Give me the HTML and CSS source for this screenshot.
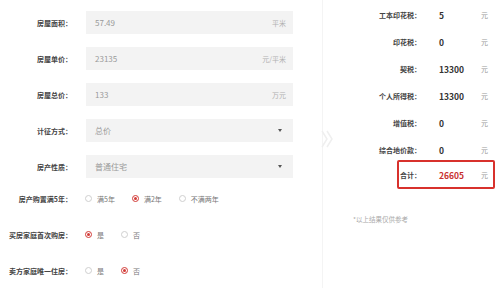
FILE: index.html
```html
<!DOCTYPE html>
<html lang="zh-CN">
<head>
<meta charset="utf-8">
<link rel="stylesheet" href="styles.css">
</head>
<body>
<div class="page">
  <div class="left">
    <div class="field">
      <label class="lbl">房屋面积：</label>
      <div class="input"><span class="val">57.49</span><span class="unit">平米</span></div>
    </div>
    <div class="field">
      <label class="lbl">房屋单价：</label>
      <div class="input"><span class="val">23135</span><span class="unit">元/平米</span></div>
    </div>
    <div class="field">
      <label class="lbl">房屋总价：</label>
      <div class="input"><span class="val">133</span><span class="unit">万元</span></div>
    </div>
    <div class="field">
      <label class="lbl">计征方式：</label>
      <div class="input"><span class="val">总价</span><span class="caret"></span></div>
    </div>
    <div class="field">
      <label class="lbl">房产性质：</label>
      <div class="input"><span class="val">普通住宅</span><span class="caret"></span></div>
    </div>
    <div class="radios">
      <div class="field">
        <label class="lbl">房产购置满5年：</label>
        <div class="opts">
          <span class="opt"><i class="radio"></i>满5年</span>
          <span class="opt"><i class="radio on"></i>满2年</span>
          <span class="opt"><i class="radio"></i>不满两年</span>
        </div>
      </div>
      <div class="field">
        <label class="lbl">买房家庭首次购房：</label>
        <div class="opts">
          <span class="opt"><i class="radio on"></i>是</span>
          <span class="opt"><i class="radio"></i>否</span>
        </div>
      </div>
      <div class="field">
        <label class="lbl">卖方家庭唯一住房：</label>
        <div class="opts">
          <span class="opt"><i class="radio"></i>是</span>
          <span class="opt"><i class="radio on"></i>否</span>
        </div>
      </div>
    </div>
  </div>
  <div class="divider">
    <svg class="chev" width="14" height="22" viewBox="0 0 14 22"><path d="M2 3 L7 11 L2 19 M7 3 L12 11 L7 19" fill="none" stroke="#efefef" stroke-width="1.5"/></svg>
  </div>
  <div class="right">
    <div class="row"><span class="rl">工本印花税：</span><span class="rv">5</span><span class="ru">元</span></div>
    <div class="row"><span class="rl">印花税：</span><span class="rv">0</span><span class="ru">元</span></div>
    <div class="row"><span class="rl">契税：</span><span class="rv">13300</span><span class="ru">元</span></div>
    <div class="row"><span class="rl">个人所得税：</span><span class="rv">13300</span><span class="ru">元</span></div>
    <div class="row"><span class="rl">增值税：</span><span class="rv">0</span><span class="ru">元</span></div>
    <div class="row"><span class="rl">综合地价款：</span><span class="rv">0</span><span class="ru">元</span></div>
    <div class="total"><span class="rl">合计：</span><span class="rv red">26605</span><span class="ru">元</span></div>
    <p class="note">*以上结果仅供参考</p>
  </div>
</div>
</body>
</html>
```
FILE: styles.css
```css
* { box-sizing: border-box; }
html, body { margin: 0; padding: 0; background: #fff; }
body {
  font-family: "Noto Sans CJK SC", "Noto Sans", sans-serif;
  color: #333;
  width: 499px;
  height: 288px;
  overflow: hidden;
}
.page { display: flex; height: 288px; }
.left {
  width: 322px;
  flex-shrink: 0;
  padding-top: 11px;
  display: flex;
  flex-direction: column;
  gap: 13px;
}
.field {
  display: grid;
  grid-template-columns: 72px 207px;
  column-gap: 14px;
  align-items: center;
  height: 23px;
}
.lbl {
  text-align: right;
  font-size: 7px;
  font-weight: 700;
  color: #444;
  white-space: nowrap;
}
.input {
  background: #f3f3f3;
  height: 23px;
  display: flex;
  align-items: center;
  justify-content: space-between;
  padding: 0 7px 0 9px;
}
.val { font-size: 8px; color: #9a9a9a; }
.unit { font-size: 7px; color: #b0b0b0; }
.caret {
  width: 0; height: 0;
  border-left: 2px solid transparent;
  border-right: 2px solid transparent;
  border-top: 3px solid #555;
  margin-right: 4px;
}
.radios {
  display: flex;
  flex-direction: column;
  gap: 13px;
  margin-top: -4px;
}
.opts {
  display: flex;
  align-items: center;
  gap: 17px;
  margin-left: -1px;
  font-size: 7px;
  color: #777;
}
.opt { display: flex; align-items: center; gap: 5px; white-space: nowrap; }
.radio {
  width: 7px; height: 7px;
  border: 1px solid #cfcfcf;
  border-radius: 50%;
  display: inline-flex;
  align-items: center;
  justify-content: center;
}
.radio.on { border-color: #d23a36; }
.radio.on::after {
  content: "";
  width: 3px; height: 3px;
  border-radius: 50%;
  background: #d23a36;
}
.divider {
  width: 1px;
  flex-shrink: 0;
  background: #f4f4f4;
  position: relative;
}
.chev { position: absolute; left: -2px; top: 128px; }
.right {
  flex: 1;
  padding-top: 1px;
  display: flex;
  flex-direction: column;
}
.row, .total {
  display: grid;
  grid-template-columns: 98px 24px auto;
  column-gap: 18px;
  align-items: center;
  height: 27px;
}
.rl { text-align: right; font-size: 7px; font-weight: 700; color: #444; white-space: nowrap; }
.rv { font-size: 8.5px; font-weight: 700; color: #333; white-space: nowrap; }
.rv.red { color: #c8302e; }
.ru { font-size: 7px; color: #999; }
.total {
  margin-top: -3px;
  margin-left: 74px;
  width: 98px;
  height: 29px;
  border: 2px solid #d8312c;
  border-radius: 2px;
  grid-template-columns: 22px 24px auto;
}
.note {
  margin: 25px 0 0 30px;
  font-size: 6.5px;
  color: #aaa;
}
```
